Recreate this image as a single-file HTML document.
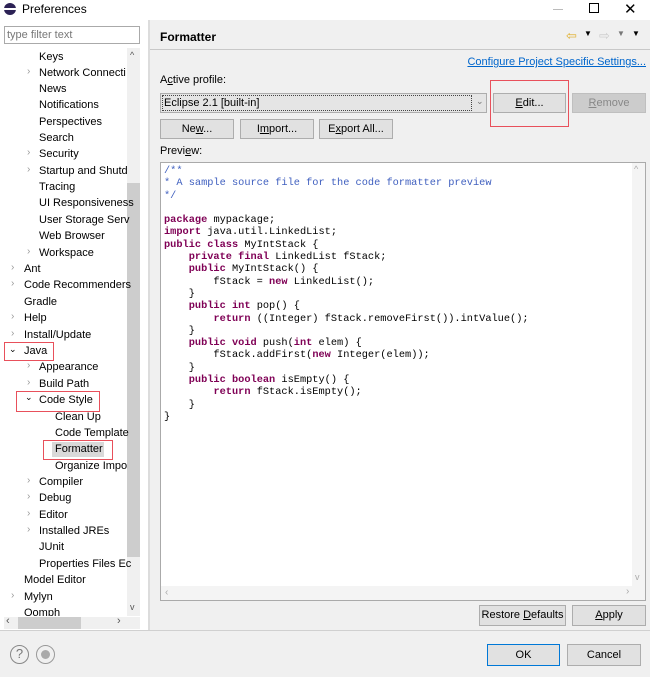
<!DOCTYPE html>
<html><head><style>
*{margin:0;padding:0;box-sizing:border-box}
body{width:650px;height:677px;background:#f0f0f0;font-family:"Liberation Sans",sans-serif;font-size:11px;color:#000;position:relative;overflow:hidden}
.a{position:absolute;white-space:nowrap}
.btn{position:absolute;background:#e1e1e1;border:1px solid #adadad;text-align:center;font-size:11px;line-height:19px}
.tr{position:absolute;font-size:11px;line-height:14px;white-space:nowrap}
.ar{position:absolute;color:#999;font-size:10px}
pre{font-family:"Liberation Mono",monospace;font-size:10.3px;line-height:12.3px;color:#000;white-space:pre !important}
.k{color:#7f0055;font-weight:bold}.c{color:#3f5fbf}
</style></head><body>
<div class="a" style="left:0;top:0;width:650px;height:20px;background:#fff"></div>
<div class="a" style="top:3px;left:4px;width:12px;height:12px;border-radius:50%;background:#2c2255"></div>
<div class="a" style="left:4px;top:8px;width:12px;height:2px;background:#fff"></div>
<div class="a" style="left:22px;top:2px;font-size:12px">Preferences</div>
<div class="a" style="left:553px;top:9px;width:10px;height:1px;background:#bbb"></div>
<div class="a" style="left:589px;top:3px;width:10px;height:10px;border:1px solid #000"></div>
<div class="a" style="left:624px;top:0px;font-size:15px">✕</div>
<!-- left panel -->
<div class="a" style="left:0;top:20px;width:148px;height:610px;background:#fff"></div>
<div class="a" style="left:4px;top:26px;width:136px;height:18px;border:1px solid #aaa;color:#777;padding-left:2px;line-height:16px;font-size:11px">type filter text</div>
<div class="a" style="left:127px;top:48px;width:13px;height:568px;background:#f0f0f0"></div>
<div class="a" style="left:127px;top:183px;width:13px;height:374px;background:#cdcdcd"></div>
<div class="a" style="left:130px;top:50px;font-size:9px;color:#555">^</div>
<div class="a" style="left:130px;top:602px;font-size:9px;color:#555">v</div>
<div class="a" style="left:4px;top:617px;width:136px;height:12px;background:#f0f0f0"></div>
<div class="a" style="left:18px;top:617px;width:63px;height:12px;background:#cdcdcd"></div>
<div class="a" style="left:6px;top:615px;color:#555">‹</div>
<div class="a" style="left:117px;top:615px;color:#555">›</div>
<div class="a" style="left:148px;top:20px;width:2px;height:610px;background:#dcdcdc"></div>

<div class="tr" style="left:39px;top:50px">Keys</div>
<div class="tr" style="left:39px;top:66px">Network Connecti</div><div class="ar" style="left:27px;top:66px">›</div>
<div class="tr" style="left:39px;top:82px">News</div>
<div class="tr" style="left:39px;top:98px">Notifications</div>
<div class="tr" style="left:39px;top:115px">Perspectives</div>
<div class="tr" style="left:39px;top:131px">Search</div>
<div class="tr" style="left:39px;top:147px">Security</div><div class="ar" style="left:27px;top:147px">›</div>
<div class="tr" style="left:39px;top:164px">Startup and Shutd</div><div class="ar" style="left:27px;top:164px">›</div>
<div class="tr" style="left:39px;top:180px">Tracing</div>
<div class="tr" style="left:39px;top:196px">UI Responsiveness</div>
<div class="tr" style="left:39px;top:213px">User Storage Serv</div>
<div class="tr" style="left:39px;top:229px">Web Browser</div>
<div class="tr" style="left:39px;top:246px">Workspace</div><div class="ar" style="left:27px;top:246px">›</div>
<div class="tr" style="left:24px;top:262px">Ant</div><div class="ar" style="left:11px;top:262px">›</div>
<div class="tr" style="left:24px;top:278px">Code Recommenders</div><div class="ar" style="left:11px;top:278px">›</div>
<div class="tr" style="left:24px;top:295px">Gradle</div>
<div class="tr" style="left:24px;top:311px">Help</div><div class="ar" style="left:11px;top:311px">›</div>
<div class="tr" style="left:24px;top:328px">Install/Update</div><div class="ar" style="left:11px;top:328px">›</div>
<div class="tr" style="left:24px;top:344px">Java</div><div class="a" style="left:9px;top:344px;font-size:9px">⌄</div>
<div class="a" style="left:4px;top:342px;width:50px;height:19px;border:1px solid #e8505b"></div>
<div class="tr" style="left:39px;top:360px">Appearance</div><div class="ar" style="left:27px;top:360px">›</div>
<div class="tr" style="left:39px;top:377px">Build Path</div><div class="ar" style="left:27px;top:377px">›</div>
<div class="tr" style="left:39px;top:393px">Code Style</div><div class="a" style="left:25px;top:392px;font-size:9px">⌄</div>
<div class="a" style="left:16px;top:391px;width:84px;height:21px;border:1px solid #e8505b"></div>
<div class="tr" style="left:55px;top:410px">Clean Up</div>
<div class="tr" style="left:55px;top:426px">Code Template</div>
<div class="a" style="left:52px;top:442px;width:52px;height:15px;background:#d9d9d9"></div>
<div class="tr" style="left:55px;top:442px">Formatter</div>
<div class="a" style="left:43px;top:440px;width:70px;height:20px;border:1px solid #e8505b"></div>
<div class="tr" style="left:55px;top:459px">Organize Impo</div>
<div class="tr" style="left:39px;top:475px">Compiler</div><div class="ar" style="left:27px;top:475px">›</div>
<div class="tr" style="left:39px;top:491px">Debug</div><div class="ar" style="left:27px;top:491px">›</div>
<div class="tr" style="left:39px;top:508px">Editor</div><div class="ar" style="left:27px;top:508px">›</div>
<div class="tr" style="left:39px;top:524px">Installed JREs</div><div class="ar" style="left:27px;top:524px">›</div>
<div class="tr" style="left:39px;top:540px">JUnit</div>
<div class="tr" style="left:39px;top:557px">Properties Files Ec</div>
<div class="tr" style="left:24px;top:573px">Model Editor</div>
<div class="tr" style="left:24px;top:590px">Mylyn</div><div class="ar" style="left:11px;top:590px">›</div>
<div class="tr" style="left:24px;top:606px;height:10px;overflow:hidden">Oomph</div>

<!-- right panel -->
<div class="a" style="left:160px;top:30px;font-weight:bold;font-size:12px">Formatter</div>
<div class="a" style="left:566px;top:28px;color:#e0b030;font-size:13px">⇦</div>
<div class="a" style="left:584px;top:29px;font-size:8px">▼</div>
<div class="a" style="left:599px;top:28px;color:#ccc;font-size:13px">⇨</div>
<div class="a" style="left:617px;top:29px;font-size:8px;color:#777">▼</div>
<div class="a" style="left:632px;top:29px;font-size:8px">▼</div>
<div class="a" style="left:150px;top:49px;width:500px;height:1px;background:#c8c8c8"></div>
<div class="a" style="right:4px;top:56px;color:#0066cc;text-decoration:underline;font-size:11px">Configure Project Specific Settings...</div>
<div class="a" style="left:160px;top:74px">A<u>c</u>tive profile:</div>
<div class="a" style="left:160px;top:93px;width:327px;height:20px;background:#e5e5e5;border:1px solid #adadad"></div>
<div class="a" style="left:162px;top:95px;width:310px;height:16px;border:1px dotted #444;line-height:14px;padding-left:1px">Eclipse 2.1 [built-in]</div>
<div class="a" style="left:476px;top:96px;color:#777;font-size:9px">⌄</div>
<div class="btn" style="left:493px;top:93px;width:73px;height:20px"><u>E</u>dit...</div>
<div class="btn" style="left:572px;top:93px;width:74px;height:20px;background:#ccc;border-color:#bfbfbf;color:#888"><u>R</u>emove</div>
<div class="a" style="left:490px;top:80px;width:79px;height:47px;border:1px solid #e8505b"></div>
<div class="btn" style="left:160px;top:119px;width:74px;height:20px">Ne<u>w</u>...</div>
<div class="btn" style="left:240px;top:119px;width:74px;height:20px">I<u>m</u>port...</div>
<div class="btn" style="left:319px;top:119px;width:74px;height:20px">E<u>x</u>port All...</div>
<div class="a" style="left:160px;top:145px">Previ<u>e</u>w:</div>
<div class="a" style="left:160px;top:162px;width:486px;height:439px;background:#fff;border:1px solid #aaa"></div>
<div class="a" style="left:632px;top:163px;width:13px;height:423px;background:#f4f4f4"></div>
<div class="a" style="left:161px;top:586px;width:484px;height:14px;background:#f4f4f4"></div>
<div class="a" style="left:634px;top:164px;font-size:9px;color:#aaa">^</div>
<div class="a" style="left:635px;top:572px;font-size:9px;color:#aaa">v</div>
<div class="a" style="left:626px;top:586px;font-size:10px;color:#aaa">›</div>
<div class="a" style="left:165px;top:587px;font-size:10px;color:#aaa">‹</div>
<pre style="position:absolute;left:164px;top:165px"><span class="c">/**
* A sample source file for the code formatter preview
*/</span>

<span class="k">package</span> mypackage;
<span class="k">import</span> java.util.LinkedList;
<span class="k">public class</span> MyIntStack {
    <span class="k">private final</span> LinkedList fStack;
    <span class="k">public</span> MyIntStack() {
        fStack = <span class="k">new</span> LinkedList();
    }
    <span class="k">public int</span> pop() {
        <span class="k">return</span> ((Integer) fStack.removeFirst()).intValue();
    }
    <span class="k">public void</span> push(<span class="k">int</span> elem) {
        fStack.addFirst(<span class="k">new</span> Integer(elem));
    }
    <span class="k">public boolean</span> isEmpty() {
        <span class="k">return</span> fStack.isEmpty();
    }
}</pre>
<div class="btn" style="left:479px;top:605px;width:87px;height:21px">Restore <u>D</u>efaults</div>
<div class="btn" style="left:572px;top:605px;width:74px;height:21px"><u>A</u>pply</div>
<div class="a" style="left:0;top:630px;width:650px;height:1px;background:#d0d0d0"></div>
<div class="a" style="left:10px;top:645px;width:19px;height:19px;border:1.5px solid #888;border-radius:50%;text-align:center;color:#777;font-size:13px;line-height:16px">?</div>
<div class="a" style="left:36px;top:645px;width:19px;height:19px;border:1.5px solid #999;border-radius:50%"></div>
<div class="a" style="left:41px;top:650px;width:9px;height:9px;background:#aaa;border-radius:50%"></div>
<div class="btn" style="left:487px;top:644px;width:73px;height:22px;border:1px solid #0078d7;line-height:20px">OK</div>
<div class="btn" style="left:567px;top:644px;width:74px;height:22px;line-height:20px">Cancel</div>
</body></html>
